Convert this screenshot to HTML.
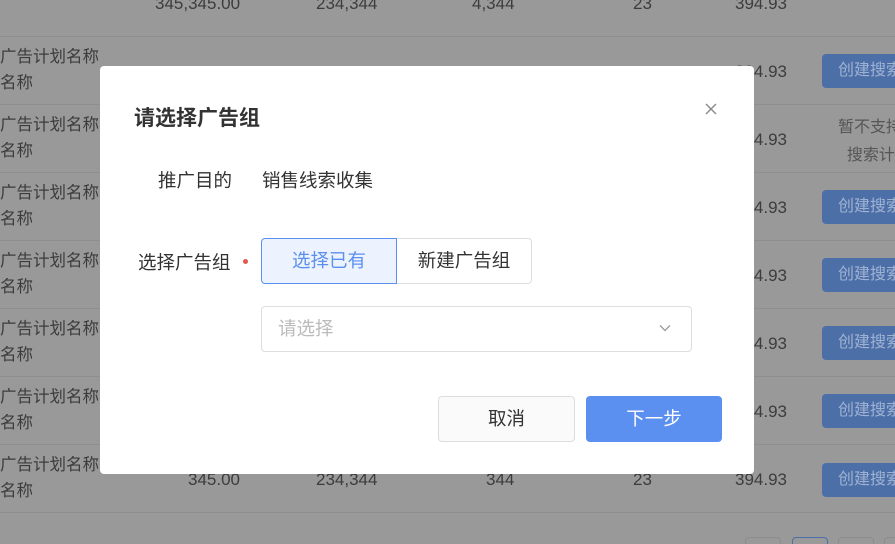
<!DOCTYPE html>
<html><head><meta charset="utf-8"><style>
*{margin:0;padding:0;box-sizing:border-box}
html{overflow:hidden;width:895px;height:544px}
body{width:895px;height:544px;overflow:hidden;background:#999;font-family:"Liberation Sans","Noto Sans CJK SC",sans-serif;position:relative;color:#3c3c3c}
.a{position:absolute;white-space:nowrap}
.line{position:absolute;left:0;width:895px;height:1px;background:#8e8e8e}
.num{font-size:17px}
.btn{position:absolute;left:822px;width:90px;height:34px;background:#4d6fa8;border-radius:4px;color:#9fb2d2;font-size:16px;line-height:34px;padding-left:16px}
.name{font-size:16.5px;line-height:26px}
.modal{position:absolute;left:100px;top:66px;width:654px;height:408px;background:#fff;border-radius:4px}
.pg{position:absolute;top:537px;width:36px;height:30px;border:1px solid #8c8c8c;border-radius:4px}
</style></head><body>
<div class="line" style="top:36px"></div>
<div class="line" style="top:104px"></div>
<div class="line" style="top:172px"></div>
<div class="line" style="top:240px"></div>
<div class="line" style="top:308px"></div>
<div class="line" style="top:376px"></div>
<div class="line" style="top:444px"></div>
<div class="line" style="top:512px"></div>

<div class="a num" style="left:155px;top:-6px">345,345.00</div>
<div class="a num" style="left:316px;top:-6px">234,344</div>
<div class="a num" style="left:472px;top:-6px">4,344</div>
<div class="a num" style="left:633px;top:-6px">23</div>
<div class="a num" style="left:735px;top:-6px">394.93</div>

<div class="a name" style="left:0;top:44px">广告计划名称<br>名称</div>
<div class="a name" style="left:0;top:112px">广告计划名称<br>名称</div>
<div class="a name" style="left:0;top:180px">广告计划名称<br>名称</div>
<div class="a name" style="left:0;top:248px">广告计划名称<br>名称</div>
<div class="a name" style="left:0;top:316px">广告计划名称<br>名称</div>
<div class="a name" style="left:0;top:384px">广告计划名称<br>名称</div>
<div class="a name" style="left:0;top:452px">广告计划名称<br>名称</div>

<div class="btn" style="top:54px">创建搜索</div>
<div class="a" style="left:838px;top:114px;font-size:16px;color:#555;line-height:28px">暂不支持<br>&nbsp;&nbsp;搜索计</div>
<div class="btn" style="top:190px">创建搜索</div>
<div class="btn" style="top:258px">创建搜索</div>
<div class="btn" style="top:326px">创建搜索</div>
<div class="btn" style="top:394px">创建搜索</div>
<div class="btn" style="top:463px">创建搜索</div>

<div class="a num" style="left:188px;top:470px">345.00</div>
<div class="a num" style="left:316px;top:470px">234,344</div>
<div class="a num" style="left:486px;top:470px">344</div>
<div class="a num" style="left:633px;top:470px">23</div>
<div class="a num" style="left:735px;top:470px">394.93</div>
<div class="a num" style="left:735px;top:62px">394.93</div>
<div class="a num" style="left:735px;top:130px">394.93</div>
<div class="a num" style="left:735px;top:198px">394.93</div>
<div class="a num" style="left:735px;top:266px">394.93</div>
<div class="a num" style="left:735px;top:334px">394.93</div>
<div class="a num" style="left:735px;top:402px">394.93</div>

<div class="pg" style="left:745px"></div>
<div class="pg" style="left:792px;border-color:#4d6fa8"></div>
<div class="pg" style="left:838px"></div>
<div class="pg" style="left:884px"></div>

<div class="modal">
  <div class="a" style="left:34px;top:36px;font-size:21px;font-weight:bold;color:#333">请选择广告组</div>
  <svg class="a" style="left:605px;top:37px" width="12" height="12" viewBox="0 0 12 12"><path d="M1 1L11 11M11 1L1 11" stroke="#888" stroke-width="1.4"/></svg>
  <div class="a" style="left:58px;top:101px;font-size:18.5px;color:#333">推广目的</div>
  <div class="a" style="left:162px;top:101px;font-size:18.5px;color:#333">销售线索收集</div>
  <div class="a" style="left:38px;top:183px;font-size:18.5px;color:#333">选择广告组</div>
  <div class="a" style="left:143px;top:193px;width:5px;height:5px;border-radius:50%;background:#e05a4e"></div>
  <div class="a" style="left:161px;top:172px;width:136px;height:46px;border:1px solid #5b8ff0;background:#edf3fe;border-radius:4px 0 0 4px;color:#5b8ff0;font-size:18.5px;text-align:center;line-height:44px">选择已有</div>
  <div class="a" style="left:297px;top:172px;width:135px;height:46px;border:1px solid #ddd;border-left:none;border-radius:0 4px 4px 0;color:#333;font-size:18.5px;text-align:center;line-height:44px">新建广告组</div>
  <div class="a" style="left:161px;top:240px;width:431px;height:46px;border:1px solid #ddd;border-radius:4px;color:#bbb;font-size:18.5px;line-height:44px;padding-left:16px">请选择</div>
  <svg class="a" style="left:559px;top:258px" width="12" height="8" viewBox="0 0 12 8"><path d="M1 1.5L6 6.5L11 1.5" stroke="#999" stroke-width="1.3" fill="none"/></svg>
  <div class="a" style="left:338px;top:330px;width:137px;height:46px;border:1px solid #ddd;border-radius:4px;background:#fafafa;color:#333;font-size:18.5px;text-align:center;line-height:44px">取消</div>
  <div class="a" style="left:486px;top:330px;width:136px;height:46px;border-radius:4px;background:#5b8ff0;color:#fff;font-size:18.5px;text-align:center;line-height:46px">下一步</div>
</div>
</body></html>
